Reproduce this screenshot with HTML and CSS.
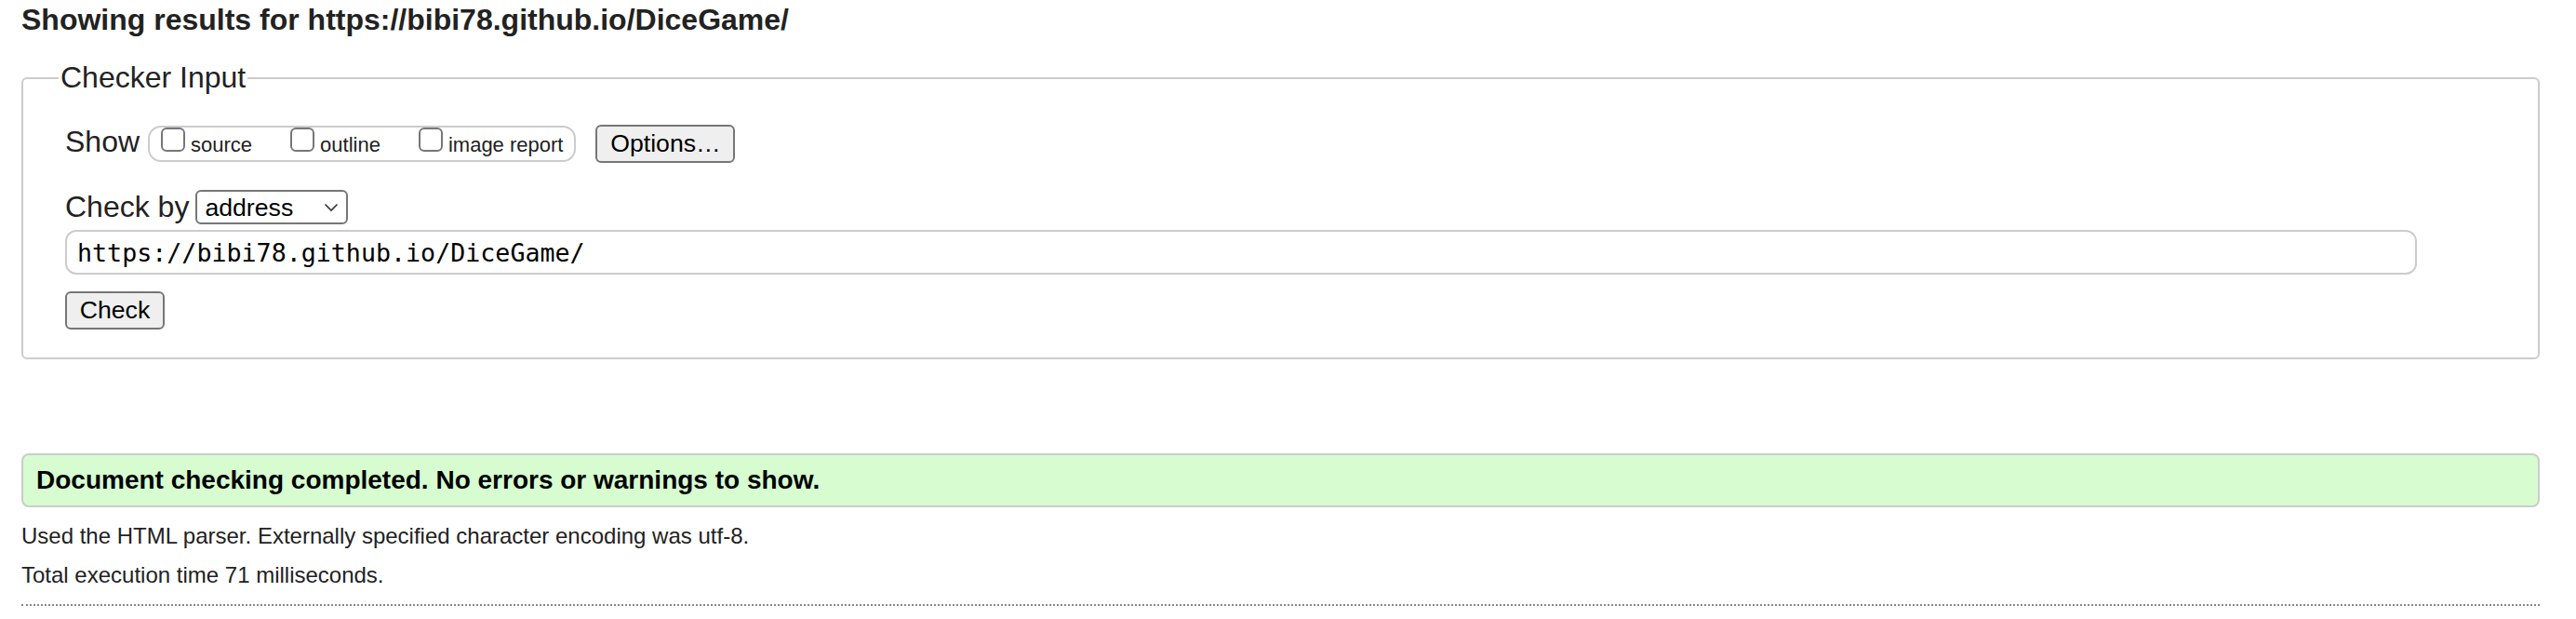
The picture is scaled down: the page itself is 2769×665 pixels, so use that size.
FILE: index.html
```html
<!DOCTYPE html>
<html lang="en">
<head>
<meta charset="utf-8">
<title>Nu Html Checker</title>
<link rel="stylesheet" href="styles.css">
</head>
<body>
<h2 class="title">Showing results for https://bibi78.github.io/DiceGame/</h2>
<form class="checker-form">
  <fieldset class="checker">
    <legend class="checker-legend">Checker Input</legend>
    <div class="row row-show">
      <span class="row-label row-label-show">Show</span>
      <span class="opts"><label class="opt"><input type="checkbox" class="cb">source</label><label class="opt"><input type="checkbox" class="cb">outline</label><label class="opt opt-last"><input type="checkbox" class="cb">image report</label></span>
      <button class="btn btn-options" type="button">Options…</button>
    </div>
    <div class="row row-by">
      <label class="row-label">Check by</label>
      <select class="sel"><option>address</option></select>
    </div>
    <div class="row-url"><input class="url" type="text" value="https://bibi78.github.io/DiceGame/"></div>
    <div class="row-submit"><button class="btn btn-check" type="button">Check</button></div>
  </fieldset>
</form>
<div class="success"><p class="success-text">Document checking completed. No errors or warnings to show.</p></div>
<p class="info">Used the HTML parser. Externally specified character encoding was utf-8.</p>
<p class="info">Total execution time 71 milliseconds.</p>
<div class="dots"></div>
</body>
</html>
```

FILE: styles.css
```css
html, body {
  background: #fff;
}
body {
  margin: 0;
  padding: 0 39px 0 23px;
  font-family: "Liberation Sans", Arial, Helvetica, sans-serif;
  color: #222;
}
.title {
  margin: 3px 0 0;
  font-size: 32px;
  font-weight: bold;
  line-height: normal;
  color: #222;
}
.checker-form {
  margin: 0;
}
.checker {
  margin: 25px 0 0;
  padding: 32px 0 30px 45px;
  border: 2px solid #ccc;
  border-radius: 6px;
  min-inline-size: 0;
}
.checker-legend {
  margin-left: -7px;
  padding: 0 2px;
  font-size: 32px;
  line-height: normal;
  color: #222;
}
.row {
  display: flex;
  align-items: center;
}
.row-label {
  font-size: 32px;
  line-height: normal;
  color: #222;
}
.row-label-show {
  margin-bottom: 4px;
}
.opts {
  display: flex;
  align-items: flex-start;
  box-sizing: border-box;
  height: 39px;
  margin-left: 9px;
  padding: 0 12px 0 0;
  border: 2px solid #ccc;
  border-radius: 14px;
  font-size: 22px;
  line-height: 35px;
  white-space: nowrap;
  color: #222;
}
.opt {
  display: block;
  margin-right: 29px;
}
.opt-last {
  margin-right: 0;
}
.cb {
  appearance: none;
  -webkit-appearance: none;
  box-sizing: border-box;
  width: 26px;
  height: 26px;
  margin: 0 6px 0 12px;
  border: 2px solid #767676;
  border-radius: 6px;
  background: #fff;
  vertical-align: baseline;
}
.btn {
  box-sizing: border-box;
  height: 41px;
  padding: 0 12px;
  border: 2px solid #767676;
  border-radius: 6px;
  background: #efefef;
  color: #000;
  font-family: "Liberation Sans", Arial, Helvetica, sans-serif;
  font-size: 26.67px;
  line-height: normal;
}
.btn-options {
  margin-left: 21px;
  width: 150px;
}
.btn-check {
  width: 107px;
}
.row-by {
  margin-top: 29px;
}
.sel {
  appearance: none;
  -webkit-appearance: none;
  box-sizing: border-box;
  width: 164px;
  height: 37px;
  margin-left: 7px;
  padding: 0 0 0 8px;
  border: 2px solid #767676;
  border-radius: 6px;
  background: #fff url("data:image/svg+xml;utf8,<svg xmlns='http://www.w3.org/2000/svg' width='16' height='10' viewBox='0 0 16 10'><path d='M1.5 1.5 L8 8 L14.5 1.5' fill='none' stroke='%23333' stroke-width='1.6'/></svg>") no-repeat right 8px center;
  color: #000;
  font-family: "Liberation Sans", Arial, Helvetica, sans-serif;
  font-size: 26.67px;
}
.row-url {
  margin-top: 6px;
}
.url {
  box-sizing: border-box;
  width: 95.1%;
  height: 48px;
  margin: 0;
  padding: 0 11px;
  border: 2px solid #ccc;
  border-radius: 12px;
  background: #fff;
  color: #000;
  font-family: "DejaVu Sans Mono", "Liberation Mono", monospace;
  font-size: 26.67px;
}
.row-submit {
  margin-top: 18px;
  display: flex;
}
.success {
  margin: 101px 0 17px;
  padding: 11px 14px;
  border: 2px solid #ccc;
  border-radius: 8px;
  background: #d6fcd0;
}
.success-text {
  margin: 0;
  font-size: 28px;
  font-weight: bold;
  line-height: normal;
  color: #000;
}
.info {
  margin: 0 0 14px;
  font-size: 24px;
  line-height: normal;
  color: #222;
}
.dots {
  margin-top: 17px;
  border-top: 2px dotted #888;
}
```
